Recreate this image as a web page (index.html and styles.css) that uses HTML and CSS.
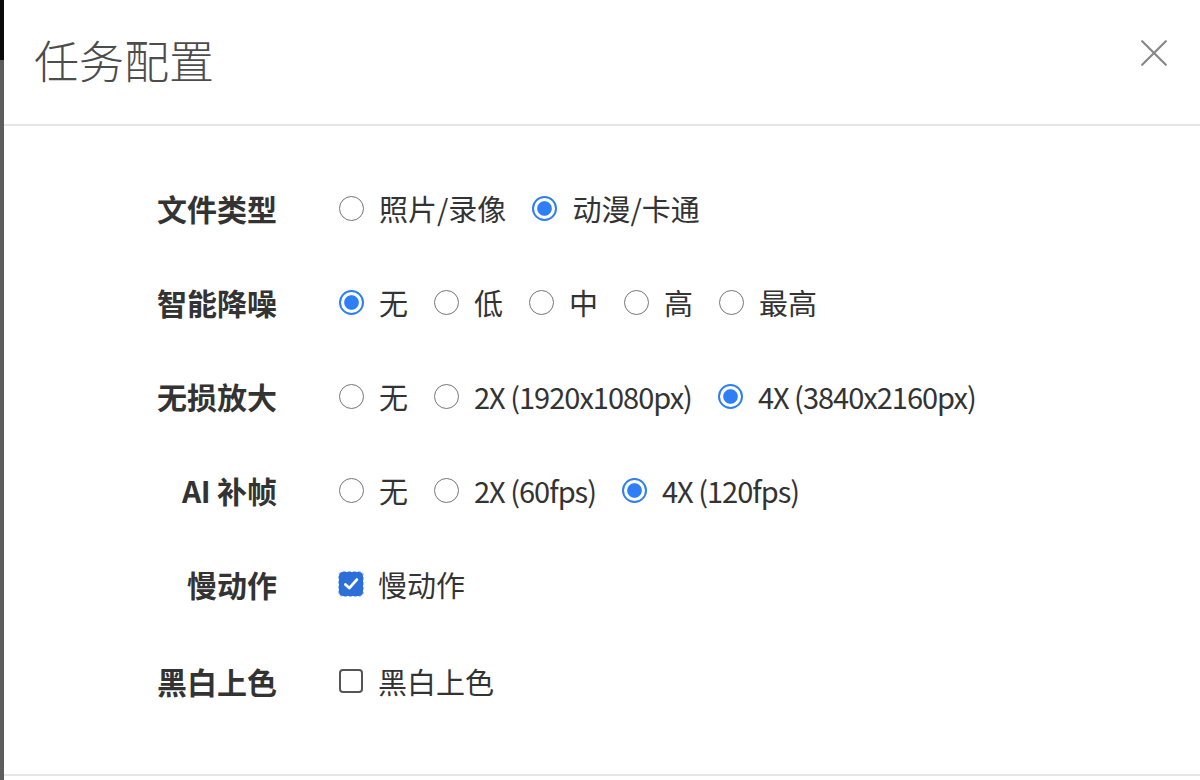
FILE: index.html
```html
<!DOCTYPE html>
<html lang="zh-CN">
<head>
<meta charset="utf-8">
<title>任务配置</title>
<link rel="stylesheet" href="styles.css">
</head>
<body>
<div class="page">
  <div class="backdrop-strip"><div class="strip-top"></div></div>
  <div class="dialog">
    <header class="dialog-header">
      <h1 class="dialog-title">任务配置</h1>
      <button class="close-btn" aria-label="关闭">
        <svg width="26" height="26" viewBox="0 0 26 26"><path d="M1.2 1.2 L24.8 24.8 M24.8 1.2 L1.2 24.8" stroke="#888" stroke-width="2.2" fill="none" stroke-linecap="round"/></svg>
      </button>
    </header>
    <div class="dialog-body">
      <div class="form-row">
        <div class="form-label">文件类型</div>
        <div class="options">
          <span class="opt"><span class="radio"></span>照片/录像</span>
          <span class="opt"><span class="radio on"></span>动漫/卡通</span>
        </div>
      </div>
      <div class="form-row">
        <div class="form-label">智能降噪</div>
        <div class="options">
          <span class="opt"><span class="radio on"></span>无</span>
          <span class="opt"><span class="radio"></span>低</span>
          <span class="opt"><span class="radio"></span>中</span>
          <span class="opt"><span class="radio"></span>高</span>
          <span class="opt"><span class="radio"></span>最高</span>
        </div>
      </div>
      <div class="form-row">
        <div class="form-label">无损放大</div>
        <div class="options">
          <span class="opt"><span class="radio"></span>无</span>
          <span class="opt"><span class="radio"></span><span class="latin">2X (1920x1080px)</span></span>
          <span class="opt"><span class="radio on"></span><span class="latin">4X (3840x2160px)</span></span>
        </div>
      </div>
      <div class="form-row">
        <div class="form-label"><span class="latin-b">AI</span> 补帧</div>
        <div class="options">
          <span class="opt"><span class="radio"></span>无</span>
          <span class="opt"><span class="radio"></span><span class="latin">2X (60fps)</span></span>
          <span class="opt"><span class="radio on"></span><span class="latin">4X (120fps)</span></span>
        </div>
      </div>
      <div class="form-row">
        <div class="form-label">慢动作</div>
        <div class="options">
          <span class="opt"><span class="check on focus"><svg width="18" height="18" viewBox="0 0 18 18"><path d="M3.4 9.4 L7.3 13.1 L14.8 4.6" stroke="#fff" stroke-width="2.8" fill="none" stroke-linecap="round" stroke-linejoin="round"/></svg></span>慢动作</span>
        </div>
      </div>
      <div class="form-row last">
        <div class="form-label">黑白上色</div>
        <div class="options">
          <span class="opt"><span class="check"></span>黑白上色</span>
        </div>
      </div>
    </div>
    <div class="dialog-footer"></div>
  </div>
</div>
</body>
</html>
```

FILE: styles.css
```css
* { box-sizing: border-box; }
html, body { margin: 0; padding: 0; }
body {
  width: 1200px;
  height: 780px;
  overflow: hidden;
  background: #fff;
  font-family: "Noto Sans CJK SC", "Noto Sans", sans-serif;
  color: #333;
}
.page {
  display: flex;
  height: 780px;
}
.backdrop-strip {
  width: 4px;
  flex: none;
  background: #5c5c5c;
}
.strip-top {
  height: 60px;
  background: #0a0a0a;
}
.dialog {
  flex: 1;
  display: flex;
  flex-direction: column;
  background: #fff;
}
.dialog-header {
  height: 126px;
  flex: none;
  display: flex;
  align-items: flex-start;
  justify-content: space-between;
  border-bottom: 2px solid #e6e6e6;
  padding: 29px 33px 0 30px;
}
.dialog-title {
  margin: 0;
  font-family: "Noto Sans CJK SC Light", "Noto Sans CJK SC", sans-serif;
  font-size: 45px;
  font-weight: 200;
  line-height: 62px;
  color: #4c4c4c;
}
.close-btn {
  margin-top: 11px;
  border: 0;
  background: none;
  padding: 0;
  width: 26px;
  height: 26px;
  cursor: pointer;
}
.close-btn svg { display: block; }
.dialog-body {
  height: 650px;
  flex: none;
  padding: 35px 0 0 133px;
  border-bottom: 2px solid #e6e6e6;
}
.form-row {
  display: flex;
  align-items: center;
  height: 94px;
}
.form-row.last { margin-top: 3px; }
.form-label {
  width: 140px;
  flex: none;
  text-align: right;
  font-size: 30px;
  font-weight: 700;
  color: #333;
}
.latin-b { letter-spacing: -0.5px; }
.options {
  display: flex;
  align-items: center;
  gap: 26px;
  margin-left: 62px;
}
.opt {
  display: flex;
  align-items: center;
  font-size: 29px;
  color: #333;
  line-height: 40px;
}
.latin { letter-spacing: -1px; }
.radio {
  width: 25px;
  height: 25px;
  border-radius: 50%;
  border: 1.6px solid #767676;
  margin-right: 15px;
  flex: none;
  background: #fff;
}
.radio.on {
  border: 2px solid #2f7ef5;
  background: radial-gradient(circle, #2f7ef5 0 6.8px, #fff 7.8px);
}
.check {
  width: 24px;
  height: 24px;
  border: 2px solid #555;
  border-radius: 4px;
  margin-right: 15px;
  flex: none;
  display: flex;
  align-items: center;
  justify-content: center;
  background: #fff;
}
.check.on {
  background: #2d6fd9;
  border-color: #2d6fd9;
}
.check.focus {
  outline: 1.5px dashed #9cc0f5;
  outline-offset: 0;
}
.check svg { display: block; }
.dialog-footer {
  flex: 1;
}
```
